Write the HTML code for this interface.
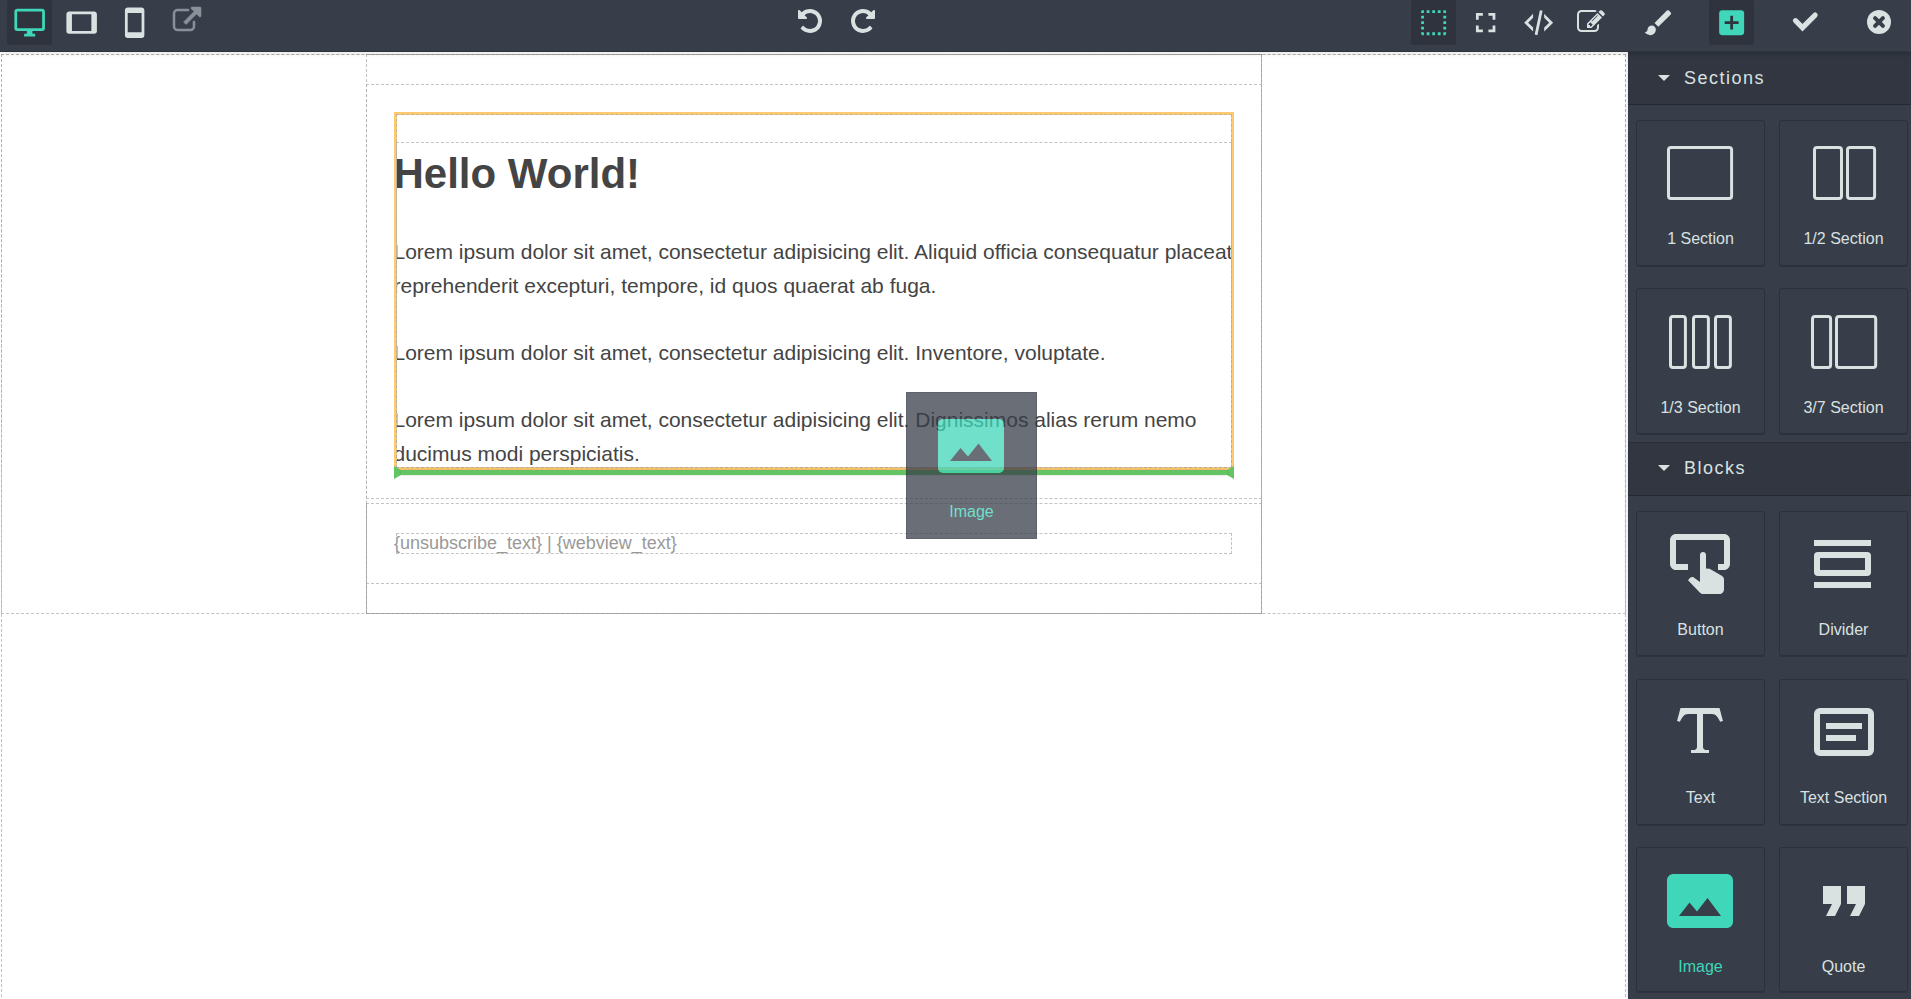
<!DOCTYPE html>
<html><head><meta charset="utf-8">
<style>
html,body{margin:0;padding:0;}
body{width:1911px;height:999px;overflow:hidden;position:relative;background:#fff;font-family:"Liberation Sans",sans-serif;}
.abs{position:absolute;}
.d{position:absolute;outline:1px dashed rgba(170,170,170,.7);outline-offset:-2px;}
#top{left:0;top:0;width:1911px;height:52px;background:#373d49;box-shadow:inset 0 -1px 0 rgba(0,0,0,.15),0 1px 6px rgba(0,0,0,.12);z-index:5;}
#top .act{position:absolute;top:0;height:45px;width:45px;border-radius:2px;background:rgba(0,0,0,.15);}
svg.i{position:absolute;overflow:visible;z-index:7}
#panel{left:1628px;top:52px;width:283px;height:947px;background:#373d49;z-index:4;box-shadow:0 0 5px rgba(0,0,0,.15);}
.hdr{position:absolute;left:1628px;width:283px;box-sizing:border-box;background:rgba(0,0,0,.1);border-bottom:1px solid rgba(0,0,0,.25);z-index:6}
.htxt{position:absolute;left:1684px;font-size:18px;line-height:24px;letter-spacing:1.5px;color:#dae1e1;white-space:nowrap;z-index:7}
.caret{position:absolute;z-index:7;width:0;height:0;border-left:6.2px solid transparent;border-right:6.2px solid transparent;border-top:6.5px solid #dae1e1;}
.blk{position:absolute;border:1px solid rgba(0,0,0,.2);border-radius:3px;box-shadow:0 1px 0 0 rgba(0,0,0,.15);z-index:6}
.lbl{position:absolute;width:129px;text-align:center;font-size:16px;line-height:20px;white-space:nowrap;z-index:7}
.blk .lb{position:absolute;left:0;right:0;text-align:center;font-size:16px;color:#dae1e1;top:108px;line-height:20px;}
.txt{position:absolute;white-space:nowrap;color:#444;}
</style></head><body>

<!-- CANVAS -->
<div class="abs" id="canvas" style="left:0;top:0;width:1628px;height:999px;background:#fff;overflow:hidden;">
  <div class="d" style="left:0;top:53px;width:1627px;height:1100px"></div>
  <div class="d" style="left:0;top:53px;width:1627px;height:562px"></div>
  <div class="d" style="left:365px;top:53px;width:898px;height:562px"></div>
  <div class="abs" style="left:366px;top:54px;width:896px;height:1px;background:rgba(150,150,150,.7)"></div>
  <div class="abs" style="left:1261px;top:54px;width:1px;height:560px;background:rgba(150,150,150,.7)"></div>
  <div class="abs" style="left:366px;top:613px;width:896px;height:1px;background:rgba(150,150,150,.7)"></div>
  <div class="abs" style="left:366px;top:503px;width:1px;height:111px;background:rgba(150,150,150,.7)"></div>
  <div class="d" style="left:365px;top:83px;width:898px;height:417px"></div>
  <div class="d" style="left:365px;top:502px;width:898px;height:83px"></div>
  <div class="txt" style="left:393.5px;top:150px;font-size:42px;font-weight:bold;line-height:48px;">Hello World!</div>
  <div class="txt" style="left:393.5px;top:235px;font-size:21px;line-height:33.6px;">Lorem ipsum dolor sit amet, consectetur adipisicing elit. Aliquid officia consequatur placeat<br>reprehenderit excepturi, tempore, id quos quaerat ab fuga.<br><br>Lorem ipsum dolor sit amet, consectetur adipisicing elit. Inventore, voluptate.<br><br>Lorem ipsum dolor sit amet, consectetur adipisicing elit. Dignissimos alias rerum nemo<br>ducimus modi perspiciatis.</div>
  <div class="txt" style="left:394px;top:533px;font-size:18px;line-height:21px;color:#999">{unsubscribe_text} | {webview_text}</div>
  <!-- text block selected parent -->
  <div class="abs" style="left:394px;top:112px;width:840px;height:358px;box-shadow:inset 0 0 0 3px #ffca6f"></div>
  <div class="d" style="left:395px;top:113px;width:838px;height:356px"></div>
  <div class="d" style="left:395px;top:141px;width:838px;height:328px"></div>
  <div class="d" style="left:395px;top:532px;width:838px;height:23px"></div>
  <!-- placeholder -->
  <div class="abs" style="left:394px;top:466px;width:840px;height:13px;box-sizing:border-box;border-style:solid;border-color:transparent #62c462;border-width:4px 7px;">
    <div style="width:100%;height:100%;background:#62c462;box-shadow:0 0 3px rgba(0,0,0,.2)"></div>
  </div>
  <!-- drag helper -->
  <div class="abs" style="left:906px;top:392px;width:131px;height:147px;opacity:.74;">
    <div style="position:absolute;left:0;top:0;width:129px;height:145px;background:#373d49;border:1px solid rgba(0,0,0,.25);"></div>
    <div style="position:absolute;left:32px;top:27px;width:66px;height:54px;border-radius:5px;background:#3fd6b9;"></div>
    <svg class="i" style="left:32px;top:27px" width="66" height="54"><polygon points="12,42 22.5,29 30,37.5 40.5,24.5 54,42" fill="#373d49"/></svg>
    <div style="position:absolute;left:0;width:131px;top:110px;text-align:center;font-size:16px;line-height:20px;color:#3fd6b9">Image</div>
  </div>
</div>

<!-- TOP BAR -->
<div class="abs" id="top">
  <div class="act" style="left:7px"></div>
  <div class="act" style="left:1411px"></div>
  <div class="act" style="left:1709px"></div>
  <svg class="i" style="left:12.7px;top:5.9px" width="33.3" height="33.3" viewBox="0 0 24 24"><path fill="#3fd6b9" d="M21,16H3V4H21M21,2H3C1.89,2 1,2.89 1,4V16A2,2 0 0,0 3,18H10V20H8V22H16V20H14V18H21A2,2 0 0,0 23,16V4C23,2.89 22.1,2 21,2Z"/></svg>
  <svg class="i" style="left:64.6px;top:6.1px" width="33.3" height="33.3" viewBox="0 0 24 24"><path fill="#dae1e1" d="M19,18H5V6H19M21,4H3C1.89,4 1,4.89 1,6V18A2,2 0 0,0 3,20H21A2,2 0 0,0 23,18V6C23,4.89 22.1,4 21,4Z"/></svg>
  <svg class="i" style="left:118.1px;top:5.6px" width="33.3" height="33.3" viewBox="0 0 24 24"><path fill="#dae1e1" d="M17,19H7V5H17M17,1H7C5.89,1 5,1.89 5,3V21A2,2 0 0,0 7,23H17A2,2 0 0,0 19,21V3C19,1.89 18.1,1 17,1Z"/></svg>
  <svg class="i" style="left:172.6px;top:7.1px" width="28" height="28" viewBox="0 0 1792 1792"><path stroke="#8a9099" stroke-width="36" fill="#8a9099" d="M1408 928v320q0 119-84.5 203.5t-203.5 84.5h-832q-119 0-203.5-84.5t-84.5-203.5v-832q0-119 84.5-203.5t203.5-84.5h704q14 0 23 9t9 23v64q0 14-9 23t-23 9h-704q-66 0-113 47t-47 113v832q0 66 47 113t113 47h832q66 0 113-47t47-113v-320q0-14 9-23t23-9h64q14 0 23 9t9 23zm384-864v512q0 26-19 45t-45 19-45-19l-176-176-652 652q-10 10-23 10t-23-10l-114-114q-10-10-10-23t10-23l652-652-176-176q-19-19-19-45t19-45 45-19h512q26 0 45 19t19 45z"/></svg>
  <svg class="i" style="left:798px;top:9px" width="24" height="24" viewBox="0 128 1536 1536"><path fill="#dae1e1" d="M1536 896q0 156-61 298t-164 245-245 164-298 61q-172 0-327-72.5t-264-204.5q-7-10-6.5-22.5t8.5-20.5l137-138q10-9 25-9 16 2 23 12 73 95 179 147t225 52q104 0 198.5-40.5t163.5-109.5 109.5-163.5 40.5-198.5-40.5-198.5-109.5-163.5-163.5-109.5-198.5-40.5q-98 0-188 35.5t-160 101.5l137 138q31 30 14 69-17 40-59 40h-448q-26 0-45-19t-19-45v-448q0-42 40-59 39-17 69 14l130 129q107-101 244.5-156.5t284.5-55.5q156 0 298 61t245 164 164 245 61 298z"/></svg>
  <svg class="i" style="left:850.5px;top:9px" width="24" height="24" viewBox="0 128 1536 1536"><path fill="#dae1e1" d="M1536 256v448q0 26-19 45t-45 19h-448q-42 0-59-40-17-39 14-69l138-138q-148-137-349-137-104 0-198.5 40.5t-163.5 109.5-109.5 163.5-40.5 198.5 40.5 198.5 109.5 163.5 163.5 109.5 198.5 40.5q119 0 225-52t179-147q7-10 23-12 15 0 25 9l137 138q9 8 9.5 20.5t-7.5 22.5q-109 132-264 204.5t-327 72.5q-156 0-298-61t-245-164-164-245-61-298 61-298 164-245 245-164 298-61q147 0 284.5 55.5t244.5 156.5l130-129q29-31 70-14 39 17 39 59z"/></svg>
  <svg class="i" style="left:1416.9px;top:5.9px" width="33.3" height="33.3" viewBox="0 0 24 24"><path fill="#3fd6b9" d="M4,3H5V5H3V4A1,1 0 0,1 4,3M20,3A1,1 0 0,1 21,4V5H19V3H20M15,5V3H17V5H15M11,5V3H13V5H11M7,5V3H9V5H7M21,20A1,1 0 0,1 20,21H19V19H21V20M15,21V19H17V21H15M11,21V19H13V21H11M7,21V19H9V21H7M4,21A1,1 0 0,1 3,20V19H5V21H4M3,15H5V17H3V15M21,15V17H19V15H21M3,11H5V13H3V11M21,11V13H19V11H21M3,7H5V9H3V7M21,7V9H19V7H21Z"/></svg>
  <svg class="i" style="left:1468.9px;top:6px" width="33.3" height="33.3" viewBox="0 0 24 24"><path fill="#dae1e1" d="M5,5H10V7H7V10H5V5M14,5H19V10H17V7H14V5M17,14H19V19H14V17H17V14M10,17V19H5V14H7V17H10Z"/></svg>
  <svg class="i" style="left:1521.7px;top:5.8px" width="33.3" height="33.3" viewBox="0 0 24 24"><path fill="#dae1e1" d="M12.89,3L14.85,3.4L11.11,21L9.15,20.6L12.89,3M19.59,12L16,8.41V5.58L22.42,12L16,18.41V15.58L19.59,12M1.58,12L8,5.58V8.41L4.41,12L8,15.58V18.41L1.58,12Z"/></svg>
  <svg class="i" style="left:1577px;top:8px" width="28" height="28" viewBox="0 0 1792 1792"><path fill="#dae1e1" d="M888 1184l116-116-152-152-116 116v56h96v96h56zm440-720q-16-16-33 1l-350 350q-17 17-1 33t33-1l350-350q17-17 1-33zm80 594v190q0 119-84.5 203.5t-203.5 84.5h-832q-119 0-203.5-84.5t-84.5-203.5v-832q0-119 84.5-203.5t203.5-84.5h832q63 0 117 25 15 7 18 23 3 17-9 29l-49 49q-14 14-32 8-23-6-45-6h-832q-66 0-113 47t-47 113v832q0 66 47 113t113 47h832q66 0 113-47t47-113v-126q0-13 9-22l64-64q15-15 35-7t20 29zm-96-738l288 288-672 672h-288v-288zm444 132l-92 92-288-288 92-92q28-28 68-28t68 28l152 152q28 28 28 68t-28 68z"/></svg>
  <svg class="i" style="left:1642px;top:5.8px" width="33.3" height="33.3" viewBox="0 0 24 24"><path fill="#dae1e1" d="M20.71,4.63L19.37,3.29C19,2.9 18.35,2.9 17.96,3.29L9,12.25L11.75,15L20.71,6.04C21.1,5.65 21.1,5 20.71,4.63M7,14A3,3 0 0,0 4,17C4,18.31 2.84,19 2,19C2.92,20.22 4.5,21 6,21A4,4 0 0,0 10,17A3,3 0 0,0 7,14Z"/></svg>
  <svg class="i" style="left:1714.7px;top:5.7px" width="33.3" height="33.3" viewBox="0 0 24 24"><path fill="#3fd6b9" d="M17,13H13V17H11V13H7V11H11V7H13V11H17M19,3H5C3.89,3 3,3.89 3,5V19A2,2 0 0,0 5,21H19A2,2 0 0,0 21,19V5C21,3.89 20.1,3 19,3Z"/></svg>
  <svg class="i" style="left:1790px;top:10px" width="30" height="24" viewBox="0 0 30 24"><path d="M5.5 10.7 L12.5 17.7 L25.1 5.1" fill="none" stroke="#dae1e1" stroke-width="5.2" stroke-linecap="round" stroke-linejoin="miter"/></svg>
  <svg class="i" style="left:1866.6px;top:9.8px" width="24" height="24" viewBox="0 0 24 24"><circle cx="12" cy="12" r="12" fill="#dae1e1"/><path d="M8.1 8.1L15.9 15.9M15.9 8.1L8.1 15.9" stroke="#373d49" stroke-width="4" stroke-linecap="round"/></svg>
</div>

<!-- PANEL -->
<div class="abs" id="panel"></div>
<div class="hdr" style="top:52px;height:53px;box-shadow:inset 0 3px 0 rgba(0,0,0,.06)"></div>
<div class="caret" style="left:1657.6px;top:75px"></div><div class="htxt" style="top:66px">Sections</div>
<div class="abs" style="left:1628px;top:442px;width:283px;height:1px;background:rgba(0,0,0,.25);z-index:6"></div>
<div class="hdr" style="top:443px;height:53px"></div>
<div class="caret" style="left:1657.6px;top:465px"></div><div class="htxt" style="top:456px">Blocks</div>
<div class="blk" style="left:1636px;top:120px;width:127px;height:144px"></div><div class="lbl" style="left:1636px;top:228.5px;color:#dae1e1">1 Section</div>
<div class="blk" style="left:1779px;top:120px;width:127px;height:144px"></div><div class="lbl" style="left:1779px;top:228.5px;color:#dae1e1">1/2 Section</div>
<div class="blk" style="left:1636px;top:288px;width:127px;height:144px"></div><div class="lbl" style="left:1636px;top:397.5px;color:#dae1e1">1/3 Section</div>
<div class="blk" style="left:1779px;top:288px;width:127px;height:144px"></div><div class="lbl" style="left:1779px;top:397.5px;color:#dae1e1">3/7 Section</div>
<div class="blk" style="left:1636px;top:511px;width:127px;height:143px"></div><div class="lbl" style="left:1636px;top:619.7px;color:#dae1e1">Button</div>
<div class="blk" style="left:1779px;top:511px;width:127px;height:143px"></div><div class="lbl" style="left:1779px;top:619.7px;color:#dae1e1">Divider</div>
<div class="blk" style="left:1636px;top:679px;width:127px;height:144px"></div><div class="lbl" style="left:1636px;top:787.7px;color:#dae1e1">Text</div>
<div class="blk" style="left:1779px;top:679px;width:127px;height:144px"></div><div class="lbl" style="left:1779px;top:787.7px;color:#dae1e1">Text Section</div>
<div class="blk" style="left:1636px;top:847px;width:127px;height:143px"></div><div class="lbl" style="left:1636px;top:956.7px;color:#3fd6b9">Image</div>
<div class="blk" style="left:1779px;top:847px;width:127px;height:143px"></div><div class="lbl" style="left:1779px;top:956.7px;color:#dae1e1">Quote</div>
<svg class="i" style="left:1667px;top:145.8px" width="66.09999999999991" height="54.099999999999994"><rect x="1.5" y="1.5" width="63.09999999999991" height="51.099999999999994" rx="2.5" fill="none" stroke="#dae1e1" stroke-width="3"/></svg>
<svg class="i" style="left:1813px;top:145.8px" width="30" height="54.099999999999994"><rect x="1.5" y="1.5" width="27" height="51.099999999999994" rx="2.5" fill="none" stroke="#dae1e1" stroke-width="3"/></svg><svg class="i" style="left:1845.9px;top:145.8px" width="30.09999999999991" height="54.099999999999994"><rect x="1.5" y="1.5" width="27.09999999999991" height="51.099999999999994" rx="2.5" fill="none" stroke="#dae1e1" stroke-width="3"/></svg>
<svg class="i" style="left:1669.1px;top:315px" width="17.90000000000009" height="53.89999999999998"><rect x="1.5" y="1.5" width="14.900000000000091" height="50.89999999999998" rx="2.5" fill="none" stroke="#dae1e1" stroke-width="3"/></svg><svg class="i" style="left:1691.5px;top:315px" width="17.90000000000009" height="53.89999999999998"><rect x="1.5" y="1.5" width="14.900000000000091" height="50.89999999999998" rx="2.5" fill="none" stroke="#dae1e1" stroke-width="3"/></svg><svg class="i" style="left:1714px;top:315px" width="17.90000000000009" height="53.89999999999998"><rect x="1.5" y="1.5" width="14.900000000000091" height="50.89999999999998" rx="2.5" fill="none" stroke="#dae1e1" stroke-width="3"/></svg>
<svg class="i" style="left:1811px;top:315px" width="21.09999999999991" height="53.89999999999998"><rect x="1.5" y="1.5" width="18.09999999999991" height="50.89999999999998" rx="2.5" fill="none" stroke="#dae1e1" stroke-width="3"/></svg><svg class="i" style="left:1834.8px;top:315px" width="42.200000000000045" height="53.89999999999998"><rect x="1.5" y="1.5" width="39.200000000000045" height="50.89999999999998" rx="2.5" fill="none" stroke="#dae1e1" stroke-width="3"/></svg>
<svg class="i" style="left:1664px;top:527.8px" width="72" height="72" viewBox="0 0 24 24"><path fill="#dae1e1" d="M20 20.5C20 21.3 19.3 22 18.5 22H13C12.6 22 12.3 21.9 12 21.6L8 17.4L8.7 16.6C8.9 16.4 9.2 16.3 9.5 16.3H9.7L12 18V9C12 8.4 12.4 8 13 8S14 8.4 14 9V13.5L15.2 13.6L19.1 15.8C19.6 16 20 16.6 20 17.1V20.5M20 2H4C2.9 2 2 2.9 2 4V12C2 13.1 2.9 14 4 14H8V12H4V4H20V12H18V14H20C21.1 14 22 13.1 22 12V4C22 2.9 21.1 2 20 2Z"/></svg>
<div class="abs" style="left:1814px;top:539.8px;width:57px;height:6.2px;background:#dae1e1;z-index:7"></div>
<div class="abs" style="left:1814px;top:552px;width:57px;height:23.8px;box-sizing:border-box;border:6px solid #dae1e1;border-radius:4px;z-index:7"></div>
<div class="abs" style="left:1814px;top:581.8px;width:57px;height:6.2px;background:#dae1e1;z-index:7"></div>
<svg class="i" style="left:1663.8px;top:695.8px" width="72" height="72" viewBox="0 0 24 24"><path fill="#dae1e1" d="M18.5,4L19.66,8.35L18.7,8.61C18.25,7.74 17.79,6.87 17.26,6.43C16.73,6 16.11,6 15.5,6H13V16.5C13,17 13,17.5 13.33,17.75C13.67,18 14.33,18 15,18V19H9V18C9.67,18 10.33,18 10.67,17.75C11,17.5 11,17 11,16.5V6H8.5C7.89,6 7.27,6 6.74,6.43C6.21,6.87 5.75,7.74 5.3,8.61L4.34,8.35L5.5,4H18.5Z"/></svg>
<svg class="i" style="left:1808px;top:695.8px" width="72" height="72" viewBox="0 0 24 24"><path fill="#dae1e1" d="M20,20H4A2,2 0 0,1 2,18V6A2,2 0 0,1 4,4H20A2,2 0 0,1 22,6V18A2,2 0 0,1 20,20M4,6V18H20V6H4M6,9H18V11H6V9M6,13H16V15H6V13Z"/></svg>
<svg class="i" style="left:1664px;top:864.8px" width="72" height="72" viewBox="0 0 24 24"><path fill="#3fd6b9" d="M21,3H3C2,3 1,4 1,5V19A2,2 0 0,0 3,21H21C22,21 23,20 23,19V5C23,4 22,3 21,3M5,17L8.5,12.5L11,15.5L14.5,11L19,17H5Z"/></svg>
<svg class="i" style="left:1807.8px;top:864.9px" width="72" height="72" viewBox="0 0 24 24"><path fill="#dae1e1" d="M14,17H17L19,13V7H13V13H16M6,17H9L11,13V7H5V13H8L6,17Z"/></svg>

</body></html>
